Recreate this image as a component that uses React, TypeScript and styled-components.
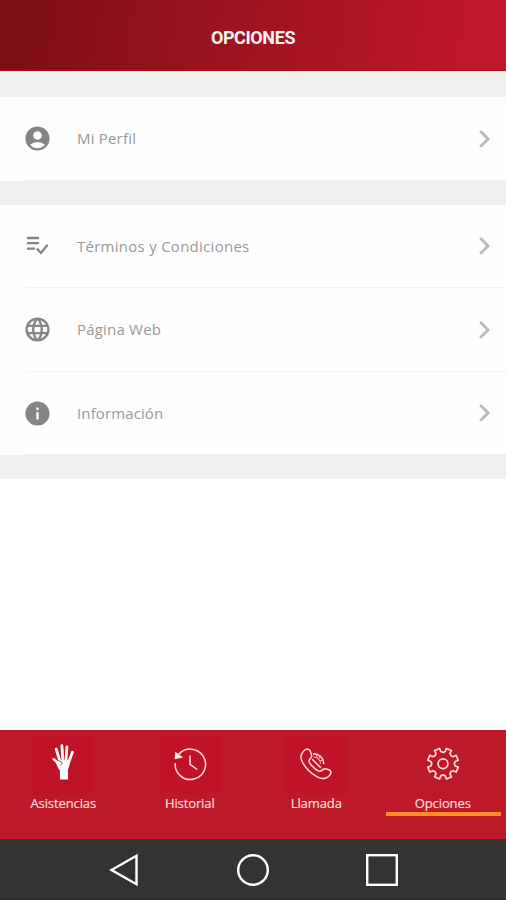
import React from "react";
import styled, { createGlobalStyle } from "styled-components";
import { MdAccountCircle, MdInfo, MdLanguage } from "react-icons/md";

const GlobalStyle = createGlobalStyle`
  html, body { margin: 0; padding: 0; background: #fff; }
  * { box-sizing: border-box; }
`;

const Screen = styled.div`
  display: flex;
  flex-direction: column;
  width: 506px;
  height: 900px;
  overflow: hidden;
  background: #fff;
  font-family: "Open Sans", "Noto Sans", sans-serif;
`;

const Header = styled.header`
  display: flex;
  align-items: center;
  justify-content: center;
  height: 71px;
  padding-top: 5px;
  background: linear-gradient(100deg, #7f0f17 6%, #c0172c 94%);
  border-bottom: 1px solid #a81018;
`;

const Title = styled.h1`
  margin: 0;
  font: 700 18px/24px Roboto, sans-serif;
  letter-spacing: -0.4px;
  color: #fff2f0;
`;

const Options = styled.main`
  flex: 1;
`;

const Gap = styled.div<{ $height: number }>`
  height: ${(p) => p.$height}px;
  background: #efefef;
`;

const Group = styled.section`
  background: #fefefe;
`;

const Row = styled.div<{ $height: number; $line: string }>`
  display: grid;
  grid-template-columns: 52px 1fr 16px;
  align-items: center;
  height: ${(p) => p.$height}px;
  margin-left: 25px;
  padding-right: 14px;
  border-bottom: 1px solid ${(p) => p.$line};
  color: #858585;
`;

const IconSlot = styled.span`
  display: flex;
  margin-left: -2px;
`;

const Label = styled.span<{ $spacing: number }>`
  padding-bottom: 1px;
  font-size: 15px;
  font-weight: 400;
  line-height: 22px;
  letter-spacing: ${(p) => p.$spacing}px;
  color: #999;
`;

const TabBar = styled.nav`
  display: grid;
  grid-template-columns: repeat(4, 126.5px);
  height: 109px;
  background: #be182b;
  border-top: 1px solid #bd150f;
`;

const Tab = styled.div`
  display: flex;
  flex-direction: column;
  align-items: center;
`;

const TabIcon = styled.div<{ $plain?: boolean }>`
  display: flex;
  justify-content: center;
  width: 60px;
  height: 58px;
  margin-top: 5px;
  padding-top: 8px;
  background: ${(p) => (p.$plain ? "transparent" : "#c11328")};
`;

const TabLabel = styled.span`
  font-size: 13px;
  line-height: 18px;
  letter-spacing: -0.1px;
  color: #ffdcd8;
  -webkit-text-stroke: 0.2px #ffdcd8;
`;

const Underline = styled.div`
  width: 115px;
  height: 4px;
  margin-left: 1px;
  background: #fc9027;
`;

const SystemBar = styled.footer`
  display: grid;
  grid-template-columns: repeat(3, 34px);
  justify-content: center;
  column-gap: 95px;
  height: 61px;
  padding-top: 14px;
  background: #333;
  border-bottom: 1px solid #292929;
`;

const ListCheck = () => (
  <svg width="29" height="29" viewBox="0 0 29 29" fill="none" stroke="currentColor" strokeWidth="2.3">
    <path d="M4 6h12M4 11.200h12M4 16.700h8" />
    <path d="M13.800 16.500l4.100 4.500 6.700-8.200" />
  </svg>
);

const Chevron = () => (
  <svg width="16" height="20" viewBox="0 0 16 20" fill="none" stroke="#b9b9b6" strokeWidth="2.800">
    <path d="M4.200 2l7.900 7.900-7.900 7.900" />
  </svg>
);

const Hand = () => (
  <svg width="36" height="40" viewBox="0 0 36 40" fill="none" stroke="#fff" strokeLinecap="round">
    <path d="M15 35.500L14.900 26.500c-.8-2.200-3.900-4.800-3.500-8.500L14 16l9.500 0 1 3.500c.1 3-1.200 4.700-1.600 7l.1 9z" fill="#fff" stroke="none" />
    <path d="M15 17.500L11.200 5M17.900 17L16.900 1.600M21 17L21.900 2.800M23.300 19.500L27.400 8.300" strokeWidth="2.800" />
    <path d="M15.200 24.500c-1.600-4.300-3.200-7.400-6.600-9.300" strokeWidth="2.500" />
    <path d="M13.500 16.800l2.900.8 1 2-1.600 1.300" stroke="#c01026" strokeWidth="0.800" />
  </svg>
);

const History = () => (
  <svg width="36" height="40" viewBox="0 0 36 40" fill="none" stroke="#ffe0dc" strokeWidth="1.500">
    <path d="M6.500 10.800A15.200 15.200 0 1 1 3.200 19" />
    <path d="M18 11.500v8.800l7.200 5.200" />
    <path d="M3.300 7.700l7.800 5.800-8.500 1.700z" fill="#ffeae7" stroke="none" />
  </svg>
);

const Phone = () => (
  <svg width="36" height="40" viewBox="0 0 36 40" fill="none" stroke="#ffdbd7" strokeWidth="1.500" strokeLinejoin="round" strokeLinecap="round">
    <path d="M5.300 7.400C7.800 4.300 11 4 12.400 7.400l1.200 4c.7 2.500-2.500 3.300-2.600 5.500 0 2.800 7.700 10.300 11 10.300 2.400 0 2.800-2.900 5.200-2.500l3.700 1c3.200 1.200 2.200 4.500-.1 6.600-3 2.800-7.200 3.100-12 .3C11.700 28.700 6.900 23 4.100 17.500c-1.700-3.500-1.500-7.300 1.200-10.100z" />
    <path d="M14.500 15.500l7.900 7.900M15.600 9.800c5.800.1 9.900 4.100 10.200 9.700" />
    <path d="M16 13c3.600.2 6.200 2.900 6.500 6.400M18 10.500l1.200 2.800M22 12.300l-1.300 2.500M24.700 16l-2.600.9" strokeWidth="0.900" />
  </svg>
);

const TOOTH = [[-22.5, 11.2], [-12, 12.400], [-10, 15.600], [10, 15.600], [12, 12.400]];

const gearOutline = Array.from({ length: 8 }, (_, i) =>
  TOOTH.map(([angle, radius]) => {
    const a = ((i * 45 + 22.5 + angle) * Math.PI) / 180;
    return `${(18 + radius * Math.cos(a)).toFixed(2)},${(19.7 + radius * Math.sin(a)).toFixed(2)}`;
  }).join(" ")
).join(" ");

const Gear = () => (
  <svg width="36" height="40" viewBox="0 0 36 40" fill="none" stroke="#ffdcd8" strokeWidth="1.700" strokeLinejoin="round">
    <polygon points={gearOutline} />
    <circle cx="18" cy="19.700" r="4.900" />
  </svg>
);

const SystemIcon = ({ children }: { children: React.ReactNode }) => (
  <svg width="34" height="34" viewBox="0 0 34 34" fill="none" stroke="#fff" strokeWidth="2.400">
    {children}
  </svg>
);

type Option = { icon: React.ReactNode; label: string; spacing: number; height: number; line: string };

const OptionRow = ({ icon, label, spacing, height, line }: Option) => (
  <Row $height={height} $line={line}>
    <IconSlot>{icon}</IconSlot>
    <Label $spacing={spacing}>{label}</Label>
    <Chevron />
  </Row>
);

const links: Option[] = [
  { icon: <ListCheck />, label: "Términos y Condiciones", spacing: 0.27, height: 83, line: "#f3f3f3" },
  { icon: <MdLanguage size={29} />, label: "Página Web", spacing: 0.2, height: 84, line: "#f3f3f3" },
  { icon: <MdInfo size={29} />, label: "Información", spacing: 0.12, height: 83, line: "#efefef" },
];

const tabs = [
  { label: "Asistencias", icon: <Hand /> },
  { label: "Historial", icon: <History /> },
  { label: "Llamada", icon: <Phone /> },
  { label: "Opciones", icon: <Gear />, active: true },
];

export default function App() {
  return (
    <Screen>
      <GlobalStyle />
      <Header>
        <Title>OPCIONES</Title>
      </Header>
      <Options>
        <Gap $height={26} />
        <Group>
          <OptionRow icon={<MdAccountCircle size={29} />} label="Mi Perfil" spacing={0.2} height={84} line="#efefef" />
        </Group>
        <Gap $height={24} />
        <Group>
          {links.map((link) => (
            <OptionRow key={link.label} {...link} />
          ))}
        </Group>
        <Gap $height={24} />
      </Options>
      <TabBar>
        {tabs.map((tab) => (
          <Tab key={tab.label}>
            <TabIcon $plain={tab.active}>{tab.icon}</TabIcon>
            <TabLabel>{tab.label}</TabLabel>
            {tab.active && <Underline />}
          </Tab>
        ))}
      </TabBar>
      <SystemBar>
        <SystemIcon><path d="M4.500 17L29.500 2.700V31.300z" /></SystemIcon>
        <SystemIcon><circle cx="17" cy="17" r="14.800" /></SystemIcon>
        <SystemIcon><rect x="2.200" y="2.200" width="29.600" height="29.600" /></SystemIcon>
      </SystemBar>
    </Screen>
  );
}
